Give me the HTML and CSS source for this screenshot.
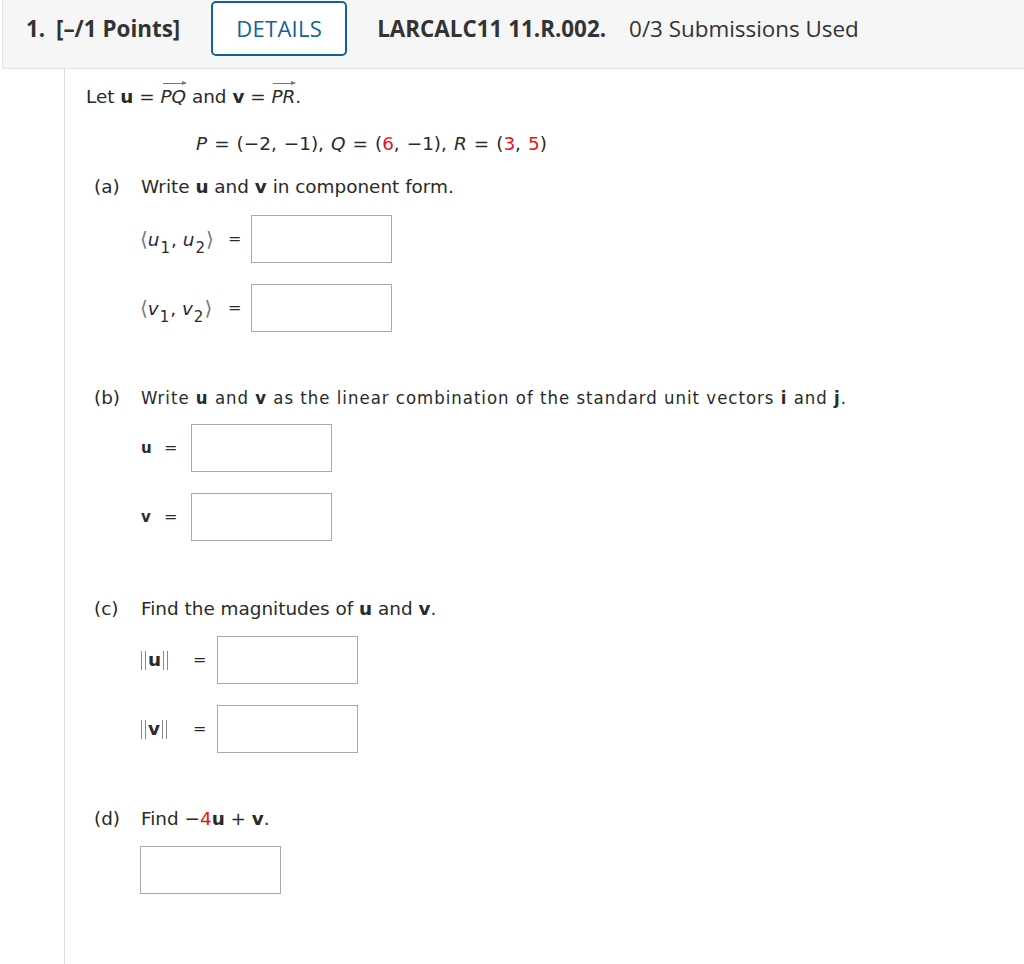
FILE: index.html
```html
<!DOCTYPE html>
<html>
<head>
<meta charset="utf-8">
<link rel="stylesheet" href="styles.css">
</head>
<body>
<div class="header">
  <span class="qnum">1.</span>
  <span class="points">[–/1 Points]</span>
  <span class="details">DETAILS</span>
  <span class="code">LARCALC11 11.R.002.</span>
  <span class="subs">0/3 Submissions Used</span>
</div>
<div class="content">
  <div class="intro">Let <b>u</b> = <span class="vec"><i>PQ</i></span> and <b>v</b> = <span class="vec"><i>PR</i></span>.</div>
  <div class="points-line"><i>P</i> = (−2, −1), <i>Q</i> = (<span class="red">6</span>, −1), <i>R</i> = (<span class="red">3</span>, <span class="red">5</span>)</div>

  <div class="part part-a">
    <span class="plabel">(a)</span>
    <div class="pbody">
      <div class="ptext">Write <b>u</b> and <b>v</b> in component form.</div>
      <div class="row first">
        <span class="lbl lbl-a"><span class="ang">⟨</span><i>u</i><sub>1</sub>, <i>u</i><sub>2</sub><span class="ang">⟩</span></span>
        <span class="eq eq-a">=</span>
        <span class="box"></span>
      </div>
      <div class="row">
        <span class="lbl lbl-a"><span class="ang">⟨</span><i>v</i><sub>1</sub>, <i>v</i><sub>2</sub><span class="ang">⟩</span></span>
        <span class="eq eq-a">=</span>
        <span class="box"></span>
      </div>
    </div>
  </div>

  <div class="part part-b">
    <span class="plabel">(b)</span>
    <div class="pbody">
      <div class="ptext narrow">Write <b>u</b> and <b>v</b> as the linear combination of the standard unit vectors <b>i</b> and <b>j</b>.</div>
      <div class="row first-b">
        <span class="lbl lbl-b"><b>u</b></span>
        <span class="eq eq-b">=</span>
        <span class="box"></span>
      </div>
      <div class="row">
        <span class="lbl lbl-b"><b>v</b></span>
        <span class="eq eq-b">=</span>
        <span class="box"></span>
      </div>
    </div>
  </div>

  <div class="part part-c">
    <span class="plabel">(c)</span>
    <div class="pbody">
      <div class="ptext">Find the magnitudes of <b>u</b> and <b>v</b>.</div>
      <div class="row first-c">
        <span class="lbl lbl-c"><span class="bar"></span><b>u</b><span class="bar"></span></span>
        <span class="eq eq-c">=</span>
        <span class="box"></span>
      </div>
      <div class="row">
        <span class="lbl lbl-c"><span class="bar"></span><b>v</b><span class="bar"></span></span>
        <span class="eq eq-c">=</span>
        <span class="box"></span>
      </div>
    </div>
  </div>

  <div class="part part-d">
    <span class="plabel">(d)</span>
    <div class="pbody">
      <div class="ptext">Find −<span class="red">4</span><b>u</b> + <b>v</b>.</div>
      <div class="row first-d">
        <span class="box box-d"></span>
      </div>
    </div>
  </div>
</div>
</body>
</html>
```

FILE: styles.css
```css
html, body {
  margin: 0;
  padding: 0;
  background: #ffffff;
}

body {
  width: 1024px;
  height: 964px;
  overflow: hidden;
}

.header {
  margin-left: 2px;
  height: 69px;
  box-sizing: border-box;
  background: #f6f6f6;
  border: 1px solid #e2e2e2;
  border-top: none;
  border-right: none;
  border-bottom-left-radius: 3px;
  display: flex;
  align-items: flex-start;
  padding-top: 1px;
  padding-left: 23px;
  font-family: "Open Sans", "Liberation Sans", sans-serif;
  font-size: 22.4px;
  color: #333333;
}

.header > span {
  line-height: 55px;
  white-space: nowrap;
}

.qnum {
  font-weight: 700;
  width: 30px;
}

.points {
  font-weight: 700;
}

.details {
  margin-left: 31px;
  width: 136px;
  flex-shrink: 0;
  height: 55px;
  box-sizing: border-box;
  border: 2px solid #0f6399;
  border-radius: 5px;
  background: #ffffff;
  color: #0f6399;
  text-align: center;
  line-height: 51px !important;
  font-size: 22px;
  letter-spacing: 0.3px;
}

.code {
  margin-left: 30px;
  font-weight: 700;
}

.subs {
  margin-left: 23px;
}

.content {
  margin-left: 64px;
  border-left: 1px solid #dddddd;
  height: 895px;
  box-sizing: border-box;
  padding-top: 17px;
  padding-left: 21px;
  font-family: "DejaVu Sans", Verdana, sans-serif;
  font-size: 18.4px;
  line-height: 22px;
  color: #2a2a2a;
}

.content b {
  font-weight: 700;
}

.intro {
  height: 22px;
  white-space: nowrap;
}

.vec {
  display: inline-block;
  position: relative;
  line-height: 22px;
}

.vec::before {
  content: "";
  position: absolute;
  left: 2px;
  right: 0;
  top: -3px;
  border-top: 1px solid #777777;
}

.vec::after {
  content: "";
  position: absolute;
  right: -1px;
  top: -5px;
  border-left: 5px solid #777777;
  border-top: 2.5px solid transparent;
  border-bottom: 2.5px solid transparent;
}

.points-line {
  margin-top: 25px;
  margin-left: 110px;
  height: 22px;
  white-space: nowrap;
  word-spacing: 1.2px;
}

.red {
  color: #ee1111;
}

.part {
  display: flex;
}

.part-a {
  margin-top: 21px;
}

.part-b {
  margin-top: 55px;
}

.part-c {
  margin-top: 57px;
}

.part-d {
  margin-top: 55px;
}

.plabel {
  width: 55px;
  padding-left: 8px;
  box-sizing: border-box;
  flex-shrink: 0;
}

.pbody {
  display: flex;
  flex-direction: column;
}

.ptext {
  height: 22px;
  white-space: nowrap;
}

.ptext.narrow {
  font-stretch: condensed;
  letter-spacing: 1px;
}

.row {
  display: flex;
  align-items: center;
  margin-top: 21px;
}

.row.first {
  margin-top: 17px;
}

.row.first-b {
  margin-top: 15px;
}

.row.first-c {
  margin-top: 16px;
}

.row.first-d {
  margin-top: 16px;
}

.box {
  display: block;
  width: 141px;
  height: 48px;
  box-sizing: border-box;
  border: 1px solid #a9a9a9;
  background: #ffffff;
}

.box-d {
  margin-left: -1px;
}

.lbl {
  white-space: nowrap;
  display: flex;
  align-items: center;
}

.lbl-a {
  width: 90px;
  margin-left: -1px;
  display: block;
}

.lbl-a i {
  color: #1f2a44;
}

.lbl-a sub {
  font-size: 15px;
  vertical-align: -7px;
  line-height: 0;
  color: #2a2a2a;
  margin-left: 1px;
  margin-right: 1px;
}

.ang {
  color: #777777;
  font-size: 20px;
}

.eq {
  font-size: 16px;
}

.eq-a {
  width: 21px;
  margin-left: -2px;
  padding-right: 2px;
}

.lbl-b {
  width: 25px;
  font-size: 15px;
}

.eq-b {
  width: 25px;
  margin-left: -2px;
  padding-right: 2px;
}

.lbl-c {
  width: 53px;
  margin-left: -1px;
}

.bar {
  display: inline-block;
  width: 5px;
  height: 19px;
  border-left: 1px solid #888888;
  border-right: 1px solid #888888;
  box-sizing: border-box;
  margin: 0 2px 0 1px;
}

.lbl-c .bar + b + .bar {
  margin: 0 0 0 2px;
}

.eq-c {
  width: 24px;
}
```
